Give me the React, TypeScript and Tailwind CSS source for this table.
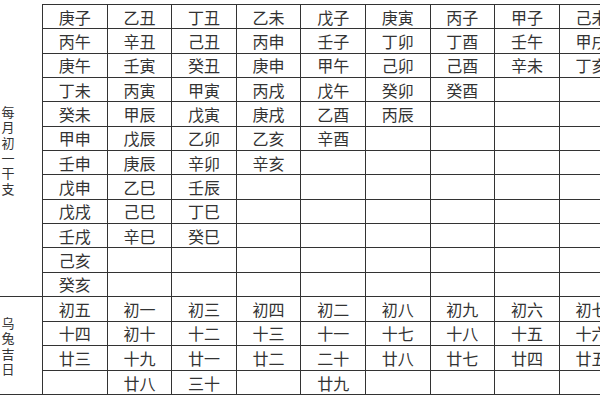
import React from "react";

const top: string[][] = [
  ["庚子", "乙丑", "丁丑", "乙未", "戊子", "庚寅", "丙子", "甲子", "己未"],
  ["丙午", "辛丑", "己丑", "丙申", "壬子", "丁卯", "丁酉", "壬午", "甲戌"],
  ["庚午", "壬寅", "癸丑", "庚申", "甲午", "己卯", "己酉", "辛未", "丁亥"],
  ["丁未", "丙寅", "甲寅", "丙戌", "戊午", "癸卯", "癸酉", "", ""],
  ["癸未", "甲辰", "戊寅", "庚戌", "乙酉", "丙辰", "", "", ""],
  ["甲申", "戊辰", "乙卯", "乙亥", "辛酉", "", "", "", ""],
  ["壬申", "庚辰", "辛卯", "辛亥", "", "", "", "", ""],
  ["戊申", "乙巳", "壬辰", "", "", "", "", "", ""],
  ["戊戌", "己巳", "丁巳", "", "", "", "", "", ""],
  ["壬戌", "辛巳", "癸巳", "", "", "", "", "", ""],
  ["己亥", "", "", "", "", "", "", "", ""],
  ["癸亥", "", "", "", "", "", "", "", ""],
];

const bottom: string[][] = [
  ["初五", "初一", "初三", "初四", "初二", "初八", "初九", "初六", "初七"],
  ["十四", "初十", "十二", "十三", "十一", "十七", "十八", "十五", "十六"],
  ["廿三", "十九", "廿一", "廿二", "二十", "廿八", "廿七", "廿四", "廿五"],
  ["", "廿八", "三十", "", "廿九", "", "", "", ""],
];

const font = { fontFamily: '"Noto Sans CJK SC", "Noto Sans", sans-serif' };

function Label({ text }: { text: string }) {
  return (
    <div className="w-[42px] shrink-0 flex flex-col justify-center pl-[1px] border-b border-[#333] text-[13px] leading-[15.3px] text-[#333]">
      {text.split("").map((c, i) => (
        <span key={i} className="block w-[14px] h-[15.3px] text-center">
          {c}
        </span>
      ))}
    </div>
  );
}

function Grid({ rows, h, topBorder }: { rows: string[][]; h: string; topBorder?: boolean }) {
  return (
    <div
      className={
        "grid grid-cols-[repeat(9,64.6px)] border-l border-[#333] shrink-0 " +
        (topBorder ? "border-t" : "")
      }
    >
      {rows.flatMap((r, ri) =>
        r.map((c, ci) => (
          <div
            key={ri + "-" + ci}
            className={
              "border-r border-b border-[#333] flex items-center justify-center text-[16px] leading-[20px] text-[#333] " +
              h
            }
          >
            {c}
          </div>
        ))
      )}
    </div>
  );
}

export default function App() {
  return (
    <div className="w-[600px] h-[400px] overflow-hidden bg-white pt-[4px]" style={font}>
      <div className="flex">
        <Label text="每月初一干支" />
        <Grid rows={top} h="h-[24.33px]" topBorder />
      </div>
      <div className="flex">
        <Label text="乌兔吉日" />
        <Grid rows={bottom} h="h-[24.6px]" />
      </div>
    </div>
  );
}
